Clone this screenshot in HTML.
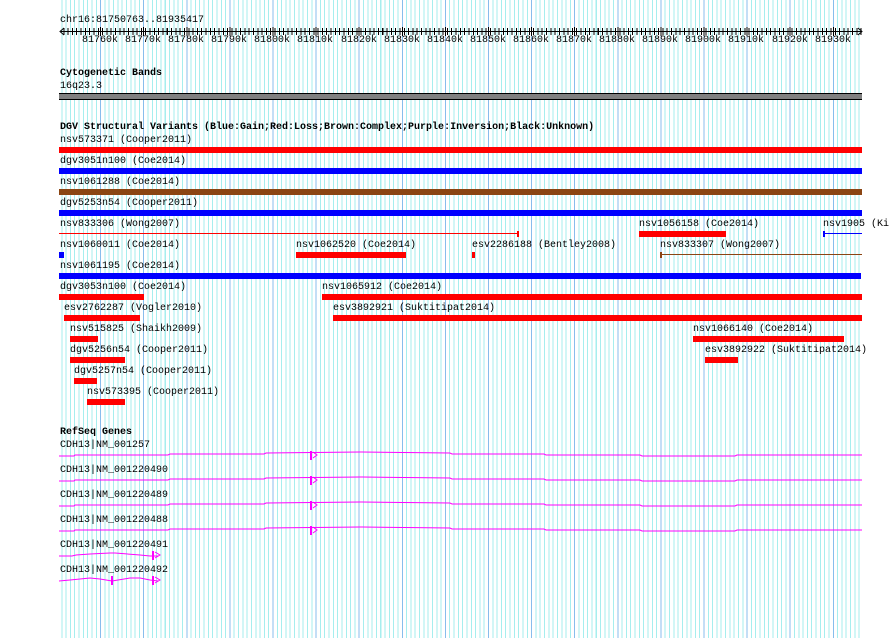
<!DOCTYPE html>
<html><head><meta charset="utf-8"><style>
body{margin:0;background:#fff;width:890px;height:638px;overflow:hidden;position:relative;font-family:"Liberation Mono",monospace;font-size:10px;color:#000}
.g{position:absolute;left:59px;top:0;width:803px;height:638px;overflow:hidden}
.g div{position:absolute;top:0;left:-1.6px;width:820px;height:638px}
.t{position:absolute;line-height:11px;white-space:pre}
.b{font-weight:bold}
.r{position:absolute;height:6px;background:#ff0000}
.bl{background:#0000ff}
.br{background:#8b4513}
</style></head><body>
<div class="g">
<div style="background:repeating-linear-gradient(to right,#a6eeee 0 1px,transparent 1px 4.31px)"></div>
<div style="background:repeating-linear-gradient(to right,#88bdec 0 1px,transparent 1px 43.1px)"></div>
</div>
<!-- ruler -->
<div class="t" style="left:60px;top:15px">chr16:81750763..81935417</div>
<div style="position:absolute;left:61px;top:31px;width:801px;height:1px;background:#000"></div>
<div style="position:absolute;left:61px;top:28px;width:801px;height:7px;overflow:hidden"><div style="position:absolute;left:-1.6px;top:0;width:820px;height:7px;background:repeating-linear-gradient(to right,#000 0 1px,transparent 1px 4.31px)"></div></div>
<div style="position:absolute;left:59px;top:27px;width:803px;height:9px;overflow:hidden"><div style="position:absolute;left:-1.6px;top:0;width:820px;height:9px;background:repeating-linear-gradient(to right,#000 0 1px,transparent 1px 43.1px)"></div></div>
<svg style="position:absolute;left:0;top:0" width="890" height="638">
<polyline points="64,28 60,31.5 64,35" fill="none" stroke="#000"/>
<polyline points="858,28 862,31.5 858,35" fill="none" stroke="#000"/>
<!-- thin lines -->
<line x1="59" y1="233.5" x2="518" y2="233.5" stroke="#ff0000"/>
<rect x="517" y="231" width="2" height="6" fill="#ff0000"/>
<line x1="823" y1="233.5" x2="862" y2="233.5" stroke="#0000ff"/>
<rect x="823" y="231" width="2" height="6" fill="#0000ff"/>
<line x1="660" y1="254.5" x2="862" y2="254.5" stroke="#8b4513"/>
<rect x="660" y="252" width="2" height="6" fill="#8b4513"/>
<!-- genes -->
<g stroke="#ff00ff" fill="none">
<polyline points="59,456 74,456 75,455 168,455 170,454 264,454 266,453 360,452 362,452 450,453 452,454 544,454 546,455 640,455 642,456 735,456 737,455 862,455"/>
<polyline points="59,481 74,481 75,480 168,480 170,479 264,479 266,478 360,477 362,477 450,478 452,479 544,479 546,480 640,480 642,481 735,481 737,480 862,480"/>
<polyline points="59,506 74,506 75,505 168,505 170,504 264,504 266,503 360,502 362,502 450,503 452,504 544,504 546,505 640,505 642,506 735,506 737,505 862,505"/>
<polyline points="59,531 74,531 75,530 168,530 170,529 264,529 266,528 360,527 362,527 450,528 452,529 544,529 546,530 640,530 642,531 735,531 737,530 862,530"/>
<polyline points="59,556 72,556 76,555 90,554 110,553 115,553 140,555 150,556 158,556"/>
<polyline points="59,581 70,580 90,578 100,579 112,581 118,580 130,578 140,578 150,580 158,581"/>
<polyline points="313,452 317,455 313,458"/><polyline points="313,477 317,480 313,483"/>
<polyline points="313,502 317,505 313,508"/><polyline points="313,527 317,530 313,533"/>
<polyline points="155,552 160,555 155,558"/><polyline points="155,577 160,580 155,583"/>
</g>
<g fill="#ff00ff">
<rect x="310" y="451" width="2" height="9"/><rect x="310" y="476" width="2" height="9"/>
<rect x="310" y="501" width="2" height="9"/><rect x="310" y="526" width="2" height="9"/>
<rect x="152" y="551" width="2" height="9"/><rect x="152" y="576" width="2" height="9"/>
<rect x="111" y="576" width="2" height="9"/>
</g>
</svg>
<div class="t" style="left:82px;top:35px">81760k</div><div class="t" style="left:125px;top:35px">81770k</div><div class="t" style="left:168px;top:35px">81780k</div><div class="t" style="left:211px;top:35px">81790k</div><div class="t" style="left:254px;top:35px">81800k</div><div class="t" style="left:297px;top:35px">81810k</div><div class="t" style="left:341px;top:35px">81820k</div><div class="t" style="left:384px;top:35px">81830k</div><div class="t" style="left:427px;top:35px">81840k</div><div class="t" style="left:470px;top:35px">81850k</div><div class="t" style="left:513px;top:35px">81860k</div><div class="t" style="left:556px;top:35px">81870k</div><div class="t" style="left:599px;top:35px">81880k</div><div class="t" style="left:642px;top:35px">81890k</div><div class="t" style="left:685px;top:35px">81900k</div><div class="t" style="left:728px;top:35px">81910k</div><div class="t" style="left:772px;top:35px">81920k</div><div class="t" style="left:815px;top:35px">81930k</div>
<div class="t b" style="left:60px;top:68px">Cytogenetic Bands</div>
<div class="t" style="left:60px;top:81px">16q23.3</div>
<div style="position:absolute;left:59px;top:93px;width:803px;height:5px;background:#808080;border-top:1px solid #000;border-bottom:1px solid #000"></div>
<div class="t b" style="left:60px;top:122px">DGV Structural Variants (Blue:Gain;Red:Loss;Brown:Complex;Purple:Inversion;Black:Unknown)</div>
<div class="t" style="left:60px;top:135px">nsv573371 (Cooper2011)</div><div class="r" style="left:59px;top:147px;width:803px"></div>
<div class="t" style="left:60px;top:156px">dgv3051n100 (Coe2014)</div><div class="r bl" style="left:59px;top:168px;width:803px"></div>
<div class="t" style="left:60px;top:177px">nsv1061288 (Coe2014)</div><div class="r br" style="left:59px;top:189px;width:803px"></div>
<div class="t" style="left:60px;top:198px">dgv5253n54 (Cooper2011)</div><div class="r bl" style="left:59px;top:210px;width:803px"></div>
<div class="t" style="left:60px;top:219px">nsv833306 (Wong2007)</div>
<div class="t" style="left:639px;top:219px">nsv1056158 (Coe2014)</div><div class="r" style="left:639px;top:231px;width:87px"></div>
<div class="t" style="left:823px;top:219px">nsv1905 (Ki</div>
<div class="t" style="left:60px;top:240px">nsv1060011 (Coe2014)</div><div class="r bl" style="left:59px;top:252px;width:5px"></div>
<div class="t" style="left:296px;top:240px">nsv1062520 (Coe2014)</div><div class="r" style="left:296px;top:252px;width:110px"></div>
<div class="t" style="left:472px;top:240px">esv2286188 (Bentley2008)</div><div class="r" style="left:472px;top:252px;width:3px"></div>
<div class="t" style="left:660px;top:240px">nsv833307 (Wong2007)</div>
<div class="t" style="left:60px;top:261px">nsv1061195 (Coe2014)</div><div class="r bl" style="left:59px;top:273px;width:802px"></div>
<div class="t" style="left:60px;top:282px">dgv3053n100 (Coe2014)</div><div class="r" style="left:59px;top:294px;width:85px"></div>
<div class="t" style="left:322px;top:282px">nsv1065912 (Coe2014)</div><div class="r" style="left:322px;top:294px;width:540px"></div>
<div class="t" style="left:64px;top:303px">esv2762287 (Vogler2010)</div><div class="r" style="left:64px;top:315px;width:76px"></div>
<div class="t" style="left:333px;top:303px">esv3892921 (Suktitipat2014)</div><div class="r" style="left:333px;top:315px;width:529px"></div>
<div class="t" style="left:70px;top:324px">nsv515825 (Shaikh2009)</div><div class="r" style="left:70px;top:336px;width:28px"></div>
<div class="t" style="left:693px;top:324px">nsv1066140 (Coe2014)</div><div class="r" style="left:693px;top:336px;width:151px"></div>
<div class="t" style="left:70px;top:345px">dgv5256n54 (Cooper2011)</div><div class="r" style="left:70px;top:357px;width:55px"></div>
<div class="t" style="left:705px;top:345px">esv3892922 (Suktitipat2014)</div><div class="r" style="left:705px;top:357px;width:33px"></div>
<div class="t" style="left:74px;top:366px">dgv5257n54 (Cooper2011)</div><div class="r" style="left:74px;top:378px;width:23px"></div>
<div class="t" style="left:87px;top:387px">nsv573395 (Cooper2011)</div><div class="r" style="left:87px;top:399px;width:38px"></div>
<div class="t b" style="left:60px;top:427px">RefSeq Genes</div>
<div class="t" style="left:60px;top:440px">CDH13|NM_001257</div>
<div class="t" style="left:60px;top:465px">CDH13|NM_001220490</div>
<div class="t" style="left:60px;top:490px">CDH13|NM_001220489</div>
<div class="t" style="left:60px;top:515px">CDH13|NM_001220488</div>
<div class="t" style="left:60px;top:540px">CDH13|NM_001220491</div>
<div class="t" style="left:60px;top:565px">CDH13|NM_001220492</div>
</body></html>
